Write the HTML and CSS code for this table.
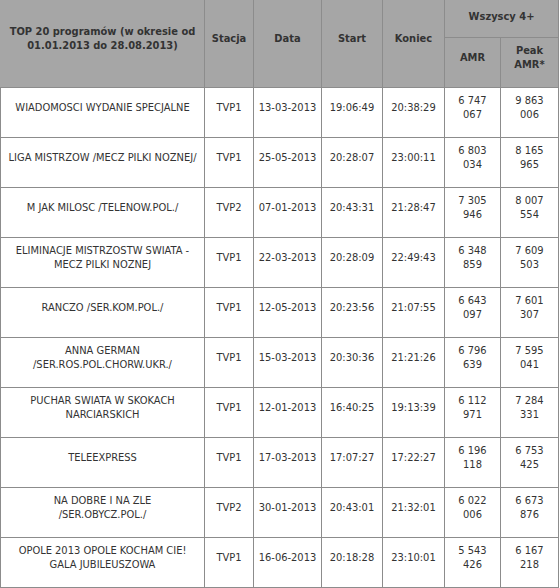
FILE: index.html
```html
<!DOCTYPE html>
<html lang="pl">
<head>
<meta charset="utf-8">
<title>TOP 20 programów</title>
<link rel="stylesheet" href="styles.css">
</head>
<body>
<table class="ratings">
  <colgroup>
    <col class="c-name">
    <col class="c-station">
    <col class="c-date">
    <col class="c-start">
    <col class="c-end">
    <col class="c-amr">
    <col class="c-peak">
  </colgroup>
  <thead>
    <tr class="head-top">
      <th rowspan="2" class="first">TOP 20 programów (w okresie od<br>01.01.2013 do 28.08.2013)</th>
      <th rowspan="2">Stacja</th>
      <th rowspan="2">Data</th>
      <th rowspan="2">Start</th>
      <th rowspan="2">Koniec</th>
      <th colspan="2" class="group">Wszyscy 4+</th>
    </tr>
    <tr class="head-sub">
      <th>AMR</th>
      <th>Peak<br>AMR*</th>
    </tr>
  </thead>
  <tbody>
    <tr><td>WIADOMOSCI WYDANIE SPECJALNE</td><td>TVP1</td><td>13-03-2013</td><td>19:06:49</td><td>20:38:29</td><td>6 747<br>067</td><td>9 863<br>006</td></tr>
    <tr><td>LIGA MISTRZOW /MECZ PILKI NOZNEJ/</td><td>TVP1</td><td>25-05-2013</td><td>20:28:07</td><td>23:00:11</td><td>6 803<br>034</td><td>8 165<br>965</td></tr>
    <tr><td>M JAK MILOSC /TELENOW.POL./</td><td>TVP2</td><td>07-01-2013</td><td>20:43:31</td><td>21:28:47</td><td>7 305<br>946</td><td>8 007<br>554</td></tr>
    <tr><td>ELIMINACJE MISTRZOSTW SWIATA -<br>MECZ PILKI NOZNEJ</td><td>TVP1</td><td>22-03-2013</td><td>20:28:09</td><td>22:49:43</td><td>6 348<br>859</td><td>7 609<br>503</td></tr>
    <tr><td>RANCZO /SER.KOM.POL./</td><td>TVP1</td><td>12-05-2013</td><td>20:23:56</td><td>21:07:55</td><td>6 643<br>097</td><td>7 601<br>307</td></tr>
    <tr><td>ANNA GERMAN<br>/SER.ROS.POL.CHORW.UKR./</td><td>TVP1</td><td>15-03-2013</td><td>20:30:36</td><td>21:21:26</td><td>6 796<br>639</td><td>7 595<br>041</td></tr>
    <tr><td>PUCHAR SWIATA W SKOKACH<br>NARCIARSKICH</td><td>TVP1</td><td>12-01-2013</td><td>16:40:25</td><td>19:13:39</td><td>6 112<br>971</td><td>7 284<br>331</td></tr>
    <tr><td>TELEEXPRESS</td><td>TVP1</td><td>17-03-2013</td><td>17:07:27</td><td>17:22:27</td><td>6 196<br>118</td><td>6 753<br>425</td></tr>
    <tr><td>NA DOBRE I NA ZLE<br>/SER.OBYCZ.POL./</td><td>TVP2</td><td>30-01-2013</td><td>20:43:01</td><td>21:32:01</td><td>6 022<br>006</td><td>6 673<br>876</td></tr>
    <tr><td>OPOLE 2013 OPOLE KOCHAM CIE!<br>GALA JUBILEUSZOWA</td><td>TVP1</td><td>16-06-2013</td><td>20:18:28</td><td>23:10:01</td><td>5 543<br>426</td><td>6 167<br>218</td></tr>
  </tbody>
</table>
</body>
</html>
```
FILE: styles.css
```css
html, body {
  margin: 0;
  padding: 0;
  background: #ffffff;
}

.ratings {
  border-collapse: collapse;
  table-layout: fixed;
  width: 559px;
  font-family: "DejaVu Sans Condensed", "DejaVu Sans", sans-serif;
  font-stretch: condensed;
  font-size: 11px;
  line-height: 14px;
  color: #333333;
}

.c-name { width: 204px; }
.c-station { width: 49px; }
.c-date { width: 68px; }
.c-start { width: 61px; }
.c-end { width: 62px; }
.c-amr { width: 56px; }
.c-peak { width: 58px; }

.ratings th,
.ratings td {
  border: 1px solid #8c8c8c;
  text-align: center;
  vertical-align: middle;
  padding: 0 3px 10px;
}

.ratings th {
  background: #a6a6a6;
  font-weight: bold;
  color: #333333;
}

.ratings thead tr:first-child th {
  border-top-color: #a6a6a6;
}

.ratings th.first {
  border-left-color: #a6a6a6;
}

.head-top {
  height: 37px;
}

.head-top th.group {
  padding-bottom: 5px;
}

.head-sub {
  height: 50px;
}

.ratings tbody tr {
  height: 50px;
}

.ratings td {
  font-weight: normal;
}
```
